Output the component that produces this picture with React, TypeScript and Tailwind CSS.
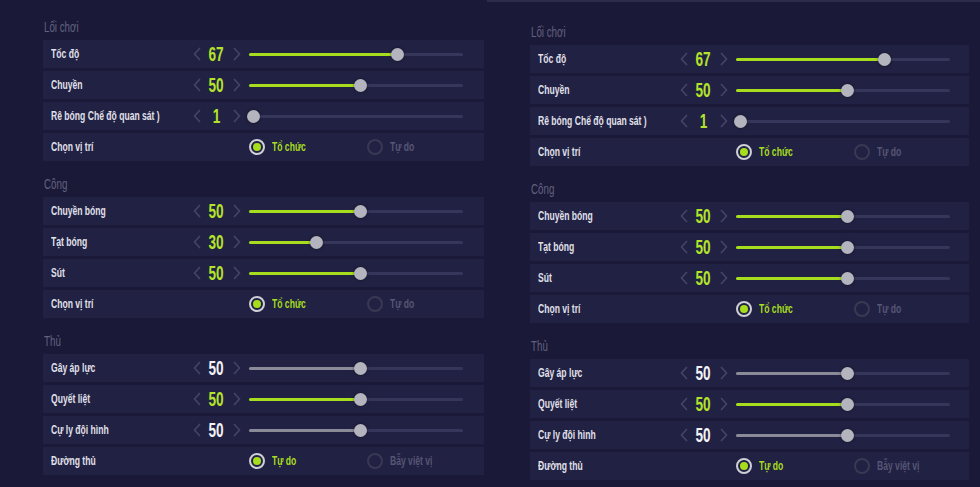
type Item =
  | { kind: 'slider'; label: string; value: number; lime: boolean }
  | { kind: 'radio'; label: string; options: [string, string]; selected: 0 | 1 }

type Section = { title: string; items: Item[] }

const font = { fontFamily: '"Liberation Sans", Arial, sans-serif' }

function makeSections(tat: number): Section[] {
  return [
    {
      title: 'Lối chơi',
      items: [
        { kind: 'slider', label: 'Tốc độ', value: 67, lime: true },
        { kind: 'slider', label: 'Chuyền', value: 50, lime: true },
        { kind: 'slider', label: 'Rê bóng Chế độ quan sát )', value: 1, lime: true },
        { kind: 'radio', label: 'Chọn vị trí', options: ['Tổ chức', 'Tự do'], selected: 0 },
      ],
    },
    {
      title: 'Công',
      items: [
        { kind: 'slider', label: 'Chuyền bóng', value: 50, lime: true },
        { kind: 'slider', label: 'Tạt bóng', value: tat, lime: true },
        { kind: 'slider', label: 'Sút', value: 50, lime: true },
        { kind: 'radio', label: 'Chọn vị trí', options: ['Tổ chức', 'Tự do'], selected: 0 },
      ],
    },
    {
      title: 'Thủ',
      items: [
        { kind: 'slider', label: 'Gây áp lực', value: 50, lime: false },
        { kind: 'slider', label: 'Quyết liệt', value: 50, lime: true },
        { kind: 'slider', label: 'Cự ly đội hình', value: 50, lime: false },
        { kind: 'radio', label: 'Đường thủ', options: ['Tự do', 'Bẫy việt vị'], selected: 0 },
      ],
    },
  ]
}

// the game font is a narrow DIN-like face, squeeze Liberation Sans to get close
function Narrow({ children, className = '' }: { children: React.ReactNode; className?: string }) {
  return <span className={`inline-block origin-left scale-x-[0.66] whitespace-nowrap ${className}`}>{children}</span>
}

function Chevron({ dir }: { dir: 'left' | 'right' }) {
  return (
    <svg width="8" height="14" viewBox="0 0 8 14" className="shrink-0">
      <path
        d={dir === 'left' ? 'M7 1 L1.5 7 L7 13' : 'M1 1 L6.5 7 L1 13'}
        fill="none"
        stroke="#45456a"
        strokeWidth="1.6"
      />
    </svg>
  )
}

function Slider({ value, lime }: { value: number; lime: boolean }) {
  const center = 2 + value * 2.18
  return (
    <div className="relative h-[13px] w-[214px]">
      <div className="absolute left-0 right-0 top-[5px] h-[3px] rounded-full bg-[#36365a]" />
      <div
        className={`absolute left-0 top-[5px] h-[3px] rounded-full ${lime ? 'bg-[#a6dd1c]' : 'bg-[#8a8a98]'}`}
        style={{ width: center }}
      />
      <div
        className="absolute top-0 h-[13px] w-[13px] rounded-full bg-[#b4b4be] shadow-[0_0_3px_rgba(0,0,0,0.5)]"
        style={{ left: center - 6.5 }}
      />
    </div>
  )
}

function Radio({ label, on }: { label: string; on: boolean }) {
  return (
    <div className="flex items-center gap-[7px]">
      <div
        className={`flex h-[16px] w-[16px] items-center justify-center rounded-full border-2 ${
          on ? 'border-[#cfcfd8]' : 'border-[#393954]'
        }`}
      >
        {on && <div className="h-[8px] w-[8px] rounded-full bg-[#a6dd1c]" />}
      </div>
      <Narrow className={`text-[13px] font-bold ${on ? 'text-[#a8de20]' : 'text-[#565674]'}`}>{label}</Narrow>
    </div>
  )
}

function Row({ item }: { item: Item }) {
  return (
    <div className="flex h-[28px] items-center bg-[#212143] pl-[8px] pr-[21px]">
      <div className="w-[142px] shrink-0 overflow-visible text-[13px] font-bold text-[#e0e0ea]">
        <Narrow>{item.label}</Narrow>
      </div>
      {item.kind === 'slider' ? (
        <div className="flex items-center">
          <Chevron dir="left" />
          <div
            className={`flex w-[31px] justify-center text-[20px] font-bold leading-none ${
              item.lime ? 'text-[#b3e32a]' : 'text-[#f2f2f6]'
            }`}
          >
            <span className="inline-block scale-x-[0.68]">{item.value}</span>
          </div>
          <div className="ml-[1px]">
            <Chevron dir="right" />
          </div>
          <div className="ml-[8px]">
            <Slider value={item.value} lime={item.lime} />
          </div>
        </div>
      ) : (
        <div className="ml-[56px] flex items-center">
          <div className="w-[118px]">
            <Radio label={item.options[0]} on={item.selected === 0} />
          </div>
          <Radio label={item.options[1]} on={item.selected === 1} />
        </div>
      )}
    </div>
  )
}

function Panel({ sections, className }: { sections: Section[]; className: string }) {
  return (
    <div className={`flex flex-col gap-[11px] pl-[43px] ${className}`}>
      {sections.map((s, i) => (
        <div key={i}>
          <div className="flex h-[25px] items-center pl-[1px] text-[15px] text-[#62627f]">
            <span className="inline-block origin-left scale-x-[0.65] whitespace-nowrap">{s.title}</span>
          </div>
          <div className="flex flex-col gap-[3px]">
            {s.items.map((it, j) => (
              <Row key={j} item={it} />
            ))}
          </div>
        </div>
      ))}
    </div>
  )
}

export default function App() {
  return (
    <div className="flex h-[487px] w-[980px] overflow-hidden bg-[#1a1938]" style={font}>
      <Panel sections={makeSections(30)} className="w-[487px] pr-[3px] pt-[15px]" />
      <Panel
        sections={makeSections(50)}
        className="w-[493px] border-t-2 border-[#2c2c4c] pr-[11px] pt-[18px]"
      />
    </div>
  )
}
